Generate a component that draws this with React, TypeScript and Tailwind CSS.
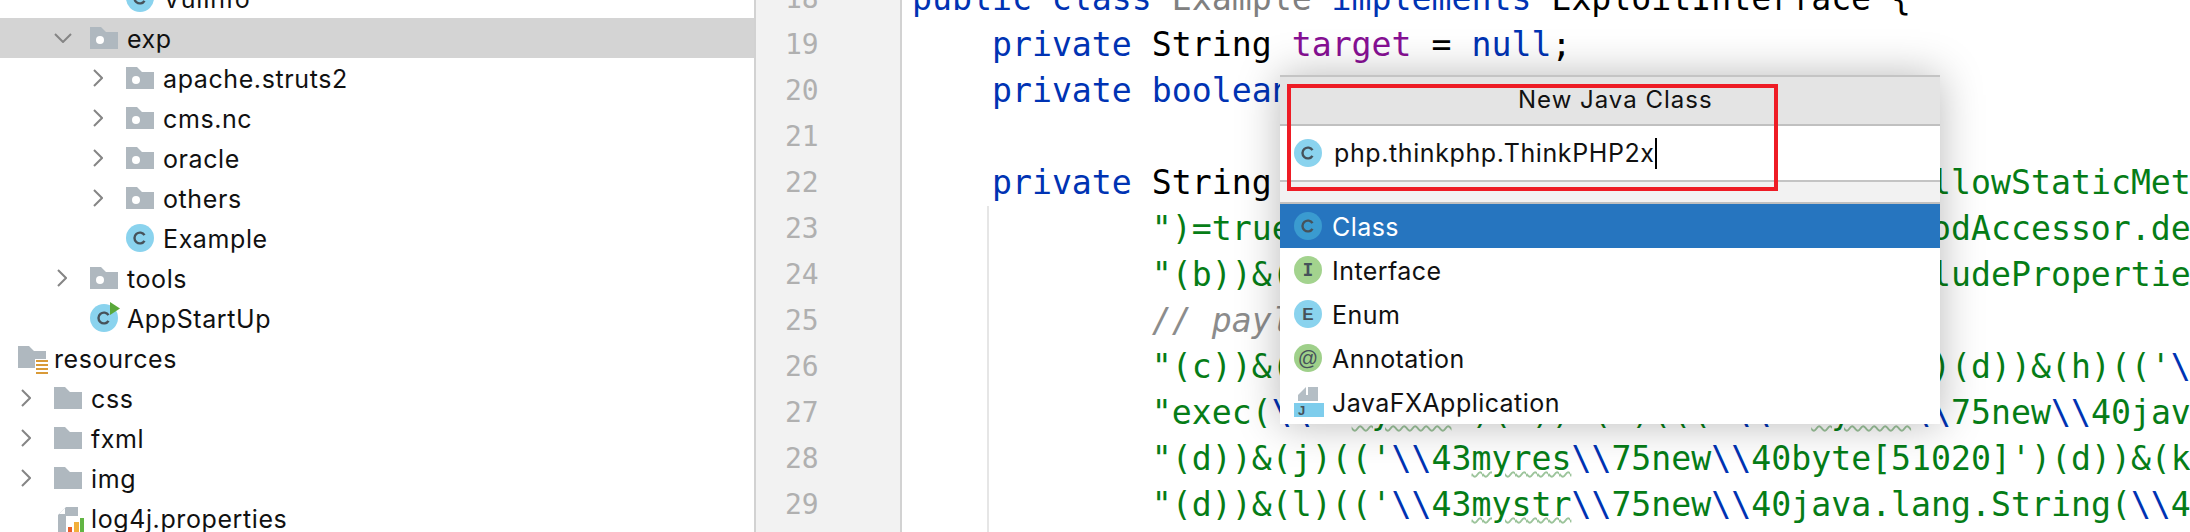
const mono = "font-['DejaVu_Sans_Mono',monospace]";

type Seg = [string, string?];

const K = 'text-[#0033b3]';
const S = 'text-[#067d17]';
const F = 'text-[#871094]';
const G = 'text-[#808080]';
const C = 'text-[#8c8c8c] italic';
const W = 'text-[#067d17] underline decoration-wavy decoration-2 decoration-[#9cc49b]';

const indent = '            ';

const codeLines: Seg[][] = [
  [['public class ', K], ['Example ', G], ['implements ', K], ['ExploitInterface {']],
  [['    '], ['private ', K], ['String '], ['target', F], [' = '], ['null', K], [';']],
  [['    '], ['private boolean ', K], ['debug', F], [' = '], ['false', K], [';']],
  [[' ']],
  [['    '], ['private ', K], ['String '], ['payload', F], [' = '], ['"(\'\\\\43_memberAccess.allowStaticMet', S]],
  [[indent], [`")=true)&(b)(('\\\\43context['xwork.Meth`.padEnd(39) + 'odAccessor.de', S]],
  [[indent], [`"(b))&(c)(('\\\\43parameters.exc`.padEnd(39) + 'ludePropertie', S]],
  [[indent], ['// payload', C]],
  [[indent], [`"(c))&(g)(('\\\\43mycmd`.padEnd(39) + `)(d))&(h)(('`, S], ['\\', K]],
  [[indent], ['"exec(', S], ['\\\\', K], ['43', S], ['mycmd', W], [`')(d))&(i)((('`, S], ['\\\\', K], ['43', S], ['myres', W], ['\\\\', K], ['75new', S], ['\\\\', K], ['40jav', S]],
  [[indent], [`"(d))&(j)(('`, S], ['\\\\', K], ['43', S], ['myres', W], ['\\\\', K], ['75new', S], ['\\\\', K], [`40byte[51020]')(d))&(k`, S]],
  [[indent], [`"(d))&(l)(('`, S], ['\\\\', K], ['43', S], ['mystr', W], ['\\\\', K], ['75new', S], ['\\\\', K], ['40java.lang.String(', S], ['\\\\', K], ['4', S]],
];

function Chevron({ open }: { open?: boolean }) {
  if (open) {
    return (
      <svg width="18" height="10" viewBox="0 0 18 10" fill="none" stroke="#858585" strokeWidth="2" className="shrink-0 ml-[18px]">
        <path d="M1 1 L9 9 L17 1" />
      </svg>
    );
  }
  return (
    <svg width="10" height="18" viewBox="0 0 10 18" fill="none" stroke="#858585" strokeWidth="2" className="shrink-0 ml-[21px]">
      <path d="M1 1 L9 9 L1 17" />
    </svg>
  );
}

function Folder({ dot }: { dot?: boolean }) {
  return (
    <svg width="28" height="22" viewBox="0 0 28 22" className="shrink-0">
      <path d="M0 0 H11 L16 5 H28 V22 H0 Z" fill="#afb8bf" />
      {dot && <circle cx="10" cy="13" r="4" fill="#fff" />}
    </svg>
  );
}

function Badge({ letter, bg = '#8ad3ee', run }: { letter: string; bg?: string; run?: boolean }) {
  return (
    <span className="relative w-7 h-7 shrink-0 flex items-center justify-center rounded-full text-[#46525a]" style={{ backgroundColor: bg }}>
      {letter === 'C' && (
        <svg width="14" height="14" viewBox="0 0 14 14" fill="none" stroke="#46525a" strokeWidth="2.4">
          <path d="M11.5 4.2 A5.4 5.4 0 1 0 11.5 9.8" />
        </svg>
      )}
      {letter === 'I' && <span className={`${mono} text-[18px] font-bold leading-none`}>I</span>}
      {letter === 'E' && <span className="font-['Liberation_Sans',sans-serif] text-[17px] font-bold leading-none">E</span>}
      {letter === '@' && <span className="font-['Liberation_Sans',sans-serif] text-[20px] leading-none">@</span>}
      {run && (
        <svg width="10" height="13" viewBox="0 0 10 13" className="absolute -top-[2px] left-[20px]">
          <path d="M0 0 L10 6.5 L0 13 Z" fill="#59a83a" />
        </svg>
      )}
    </span>
  );
}

function Row({ left, chevron, icon, label, selected }: { left: number; chevron?: 'open' | 'closed'; icon: React.ReactNode; label: string; selected?: boolean }) {
  return (
    <div className={`h-10 flex items-center shrink-0 ${selected ? 'bg-[#d4d4d4]' : ''}`} style={{ paddingLeft: left }}>
      <span className="w-[54px] shrink-0 flex items-center">
        {chevron && <Chevron open={chevron === 'open'} />}
      </span>
      <span className="w-[37px] shrink-0 flex items-center">{icon}</span>
      <span className="text-[25px] tracking-[0.6px] text-[#111] whitespace-nowrap leading-none pt-[2px]">{label}</span>
    </div>
  );
}

function ResourcesIcon() {
  return (
    <svg width="32" height="28" viewBox="0 0 32 28" className="shrink-0 mt-[4px]">
      <path d="M0 0 H11 L16 5 H28 V22 H0 Z" fill="#afb8bf" />
      <rect x="17" y="13" width="15" height="15" fill="#fff" />
      <path d="M18 15 H30 M18 19 H30 M18 23 H30 M18 27 H30" stroke="#d99a38" strokeWidth="2" />
    </svg>
  );
}

function PropsIcon() {
  return (
    <svg width="26" height="28" viewBox="0 0 26 28" className="shrink-0 ml-[4px] self-start mt-[6px]">
      <path d="M8 0 H20 V28 H0 V8 Z" fill="#afb8bf" />
      <path d="M1 7 L7 1 V7 Z" fill="#fff" />
      <rect x="8" y="9" width="18" height="19" fill="#fff" />
      <rect x="10" y="20" width="4" height="8" fill="#e8602c" />
      <rect x="16" y="15" width="5" height="13" fill="#f2b03c" />
      <rect x="22" y="11" width="4" height="17" fill="#62b543" />
    </svg>
  );
}

function FxIcon() {
  return (
    <svg width="30" height="30" viewBox="0 0 30 30" className="shrink-0">
      <path d="M4 8 L12 0 V8 Z" fill="#b4bec5" />
      <path d="M14 0 H24 V8 H14 Z" fill="#b4bec5" />
      <rect x="4" y="8" width="20" height="6" fill="#b4bec5" />
      <rect x="0" y="16" width="30" height="14" fill="#7ecdec" />
      <text x="4" y="28" fontSize="13" fontWeight="700" fill="#46525a" fontFamily="Liberation Sans, sans-serif">J</text>
    </svg>
  );
}

function PopupItem({ icon, label, selected }: { icon: React.ReactNode; label: string; selected?: boolean }) {
  return (
    <div className={`h-11 shrink-0 flex items-center pl-[14px] gap-[10px] ${selected ? 'bg-[#2675bf] text-white' : 'text-[#111]'}`}>
      <span className="w-[28px] flex justify-start shrink-0">{icon}</span>
      <span className="text-[25px] tracking-[0.45px] leading-none whitespace-nowrap pt-[2px]">{label}</span>
    </div>
  );
}

export default function App() {
  return (
    <div className="w-[2190px] h-[532px] overflow-hidden bg-white flex font-['Inter',sans-serif] relative">
      {/* Project tree */}
      <aside className="w-[754px] shrink-0 h-full flex flex-col -mt-[22px]">
        <Row left={72} icon={<Badge letter="C" />} label="VulInfo" />
        <Row left={36} chevron="open" selected icon={<Folder dot />} label="exp" />
        <Row left={72} chevron="closed" icon={<Folder dot />} label="apache.struts2" />
        <Row left={72} chevron="closed" icon={<Folder dot />} label="cms.nc" />
        <Row left={72} chevron="closed" icon={<Folder dot />} label="oracle" />
        <Row left={72} chevron="closed" icon={<Folder dot />} label="others" />
        <Row left={72} icon={<Badge letter="C" />} label="Example" />
        <Row left={36} chevron="closed" icon={<Folder dot />} label="tools" />
        <Row left={36} icon={<Badge letter="C" run />} label="AppStartUp" />
        <div className="h-10 flex items-center pl-[18px] shrink-0">
          <span className="w-[36px] shrink-0 flex"><ResourcesIcon /></span>
          <span className="text-[25px] tracking-[0.6px] text-[#111] leading-none pt-[2px]">resources</span>
        </div>
        <Row left={0} chevron="closed" icon={<Folder />} label="css" />
        <Row left={0} chevron="closed" icon={<Folder />} label="fxml" />
        <Row left={0} chevron="closed" icon={<Folder />} label="img" />
        <Row left={0} icon={<PropsIcon />} label="log4j.properties" />
      </aside>

      {/* Gutter */}
      <div className={`w-[148px] shrink-0 h-full bg-[#f2f2f2] border-x-2 border-[#d2d2d2] flex flex-col items-start pl-[29px] ${mono}`}>
        <div className="-mt-[24px] flex flex-col">
          {[18, 19, 20, 21, 22, 23, 24, 25, 26, 27, 28, 29].map((n) => (
            <div key={n} className="h-[46px] leading-[46px] text-[28px] text-[#b0b0b0]">{n}</div>
          ))}
        </div>
      </div>

      {/* Editor */}
      <main className={`flex-1 relative overflow-hidden ${mono} text-[33.2px] pl-[10px]`}>
        <div className="-mt-[24px] flex flex-col">
          {codeLines.map((line, i) => (
            <div key={i} className="h-[46px] leading-[46px] whitespace-pre text-black">
              {line.map(([t, c], j) => (
                <span key={j} className={c}>{t}</span>
              ))}
            </div>
          ))}
        </div>
        <div className="absolute left-[85px] top-[206px] bottom-0 w-[2px] bg-[#e6e6e6]" />
      </main>

      {/* New class popup */}
      <div className="absolute left-[1280px] top-[75px] w-[660px] h-[349px] bg-white flex flex-col shadow-[0_0_40px_rgba(0,0,0,0.28)]">
        <div className="h-[51px] shrink-0 bg-[#e4e4e4] border-t-2 border-b-2 border-t-[#c4c4c4] border-b-[#c0c0c0] flex items-center pl-[238px] pb-[2px]">
          <span className="text-[24px] tracking-[1px] text-[#111]">New Java Class</span>
        </div>
        <div className="h-[56px] shrink-0 bg-white flex items-center pl-[14px] gap-[12px] border-b-2 border-[#c4c4c4]">
          <Badge letter="C" />
          <span className="text-[25px] tracking-[0.6px] text-[#111] leading-none whitespace-nowrap border-r-2 border-black h-[31px] flex items-center">php.thinkphp.ThinkPHP2x</span>
        </div>
        <div className="h-[22px] shrink-0 bg-[#f2f2f2] border-b-2 border-[#c0c0c0]" />
        <PopupItem selected icon={<Badge letter="C" bg="#3a9bd0" />} label="Class" />
        <PopupItem icon={<Badge letter="I" bg="#a3d38e" />} label="Interface" />
        <PopupItem icon={<Badge letter="E" />} label="Enum" />
        <PopupItem icon={<Badge letter="@" bg="#9fd08a" />} label="Annotation" />
        <PopupItem icon={<FxIcon />} label="JavaFXApplication" />
      </div>

      {/* Red annotation box */}
      <div className="absolute left-[1287px] top-[84px] w-[491px] h-[107px] border-[4px] border-[#ee1c25]" />
    </div>
  );
}
